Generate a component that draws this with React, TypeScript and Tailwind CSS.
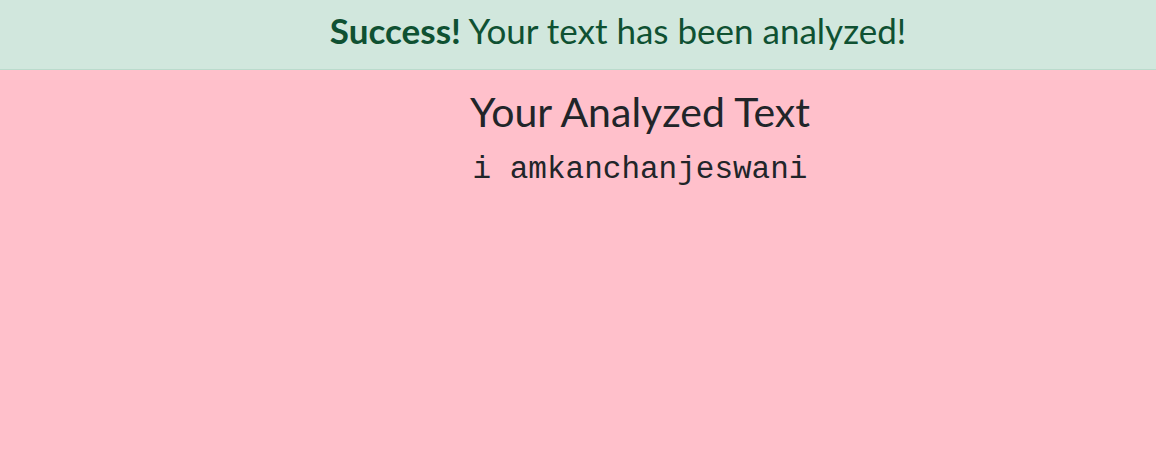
export default function App() {
  return (
    <div className="min-h-[452px] bg-[#ffc0cb] font-['Lato',sans-serif] text-[#212529]">
      <div className="flex h-[70px] items-center justify-center border-b border-[#badbcc] bg-[#d1e7dd] pb-[8px] pl-[80px] text-[35px] text-[#0f5132]">
        <p>
          <strong className="font-bold">Success!</strong> Your text has been analyzed!
        </p>
      </div>
      <div className="flex flex-col items-center pl-[124px] pt-[17px]">
        <h2 className="text-[41px] leading-[1.2]">Your Analyzed Text</h2>
        <p className="mt-[12px] font-['Liberation_Mono',monospace] text-[31px] leading-[1.4]">i amkanchanjeswani</p>
      </div>
    </div>
  );
}
